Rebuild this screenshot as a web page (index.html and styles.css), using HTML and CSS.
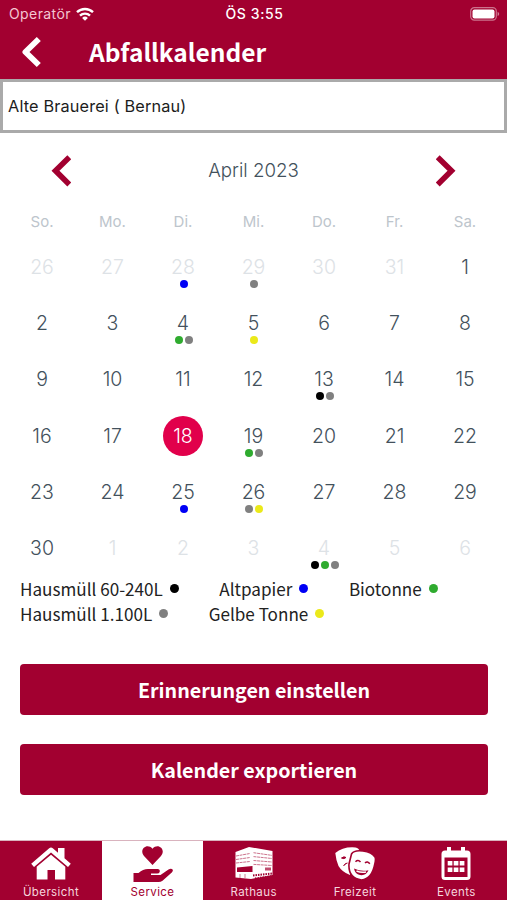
FILE: index.html
```html
<!DOCTYPE html>
<html lang="de">
<head>
    <meta charset="UTF-8">
    <meta name="viewport" content="width=device-width, initial-scale=1.0">
    <title>Abfallkalender</title>
    <link rel="stylesheet" href="styles.css">
</head>
<body>
    <div class="app">
        <header class="top">
            <div class="status-bar">
                <div class="carrier">
                    <span>Operatör</span>
                    <svg width="18" height="14" viewBox="0 0 18 14" fill="none" stroke="#fff" stroke-width="2.4">
                        <path d="M1 5.2A11.5 11.5 0 0 1 17 5.2"/>
                        <path d="M4 8.6A7.2 7.2 0 0 1 14 8.6"/>
                        <path d="M9 13.8L6.1 10.9A4.2 4.2 0 0 1 11.9 10.9Z" fill="#fff" stroke="none"/>
                    </svg>
                </div>
                <span class="clock">ÖS 3:55</span>
                <svg class="battery" width="30" height="14" viewBox="0 0 30 14">
                    <rect x="0.7" y="0.7" width="25.6" height="12.4" rx="3.6" fill="none" stroke="#fff" stroke-opacity="0.45" stroke-width="1.2"/>
                    <rect x="2.5" y="2.4" width="22" height="9" rx="2" fill="#fff"/>
                    <path d="M27.6 4.8Q29.2 5.6 29.2 6.9T27.6 9Z" fill="#fff" fill-opacity="0.5"/>
                </svg>
            </div>
            <div class="title-bar">
                <svg width="20" height="32" viewBox="0 0 20 32" fill="none" stroke="#fff" stroke-width="5.8" stroke-linejoin="round">
                    <path d="M17.8 3L4.4 16L17.8 29"/>
                </svg>
                <h1>Abfallkalender</h1>
            </div>
        </header>

        <div class="address">Alte Brauerei ( Bernau)</div>

        <main>
            <div class="month">
                <svg width="20" height="32" viewBox="0 0 20 32" fill="none" stroke="#a20030" stroke-width="5.6">
                    <path d="M18.3 2.2L4.5 15.8L18.3 29.4"/>
                </svg>
                <span>April 2023</span>
                <svg width="20" height="32" viewBox="0 0 20 32" fill="none" stroke="#a20030" stroke-width="5.6">
                    <path d="M1.7 2.2L15.5 15.8L1.7 29.4"/>
                </svg>
            </div>

            <div class="weekdays">
                <span>So.</span><span>Mo.</span><span>Di.</span><span>Mi.</span><span>Do.</span><span>Fr.</span><span>Sa.</span>
            </div>

            <div class="days">
                <div class="day other"><span>26</span></div>
                <div class="day other"><span>27</span></div>
                <div class="day other"><span>28</span><div class="dots"><i class="blue"></i></div></div>
                <div class="day other"><span>29</span><div class="dots"><i class="gray"></i></div></div>
                <div class="day other"><span>30</span></div>
                <div class="day other"><span>31</span></div>
                <div class="day"><span>1</span></div>

                <div class="day"><span>2</span></div>
                <div class="day"><span>3</span></div>
                <div class="day"><span>4</span><div class="dots"><i class="green"></i><i class="gray"></i></div></div>
                <div class="day"><span>5</span><div class="dots"><i class="yellow"></i></div></div>
                <div class="day"><span>6</span></div>
                <div class="day"><span>7</span></div>
                <div class="day"><span>8</span></div>

                <div class="day"><span>9</span></div>
                <div class="day"><span>10</span></div>
                <div class="day"><span>11</span></div>
                <div class="day"><span>12</span></div>
                <div class="day"><span>13</span><div class="dots"><i class="black"></i><i class="gray"></i></div></div>
                <div class="day"><span>14</span></div>
                <div class="day"><span>15</span></div>

                <div class="day"><span>16</span></div>
                <div class="day"><span>17</span></div>
                <div class="day today"><span>18</span></div>
                <div class="day"><span>19</span><div class="dots"><i class="green"></i><i class="gray"></i></div></div>
                <div class="day"><span>20</span></div>
                <div class="day"><span>21</span></div>
                <div class="day"><span>22</span></div>

                <div class="day"><span>23</span></div>
                <div class="day"><span>24</span></div>
                <div class="day"><span>25</span><div class="dots"><i class="blue"></i></div></div>
                <div class="day"><span>26</span><div class="dots"><i class="gray"></i><i class="yellow"></i></div></div>
                <div class="day"><span>27</span></div>
                <div class="day"><span>28</span></div>
                <div class="day"><span>29</span></div>

                <div class="day"><span>30</span></div>
                <div class="day other"><span>1</span></div>
                <div class="day other"><span>2</span></div>
                <div class="day other"><span>3</span></div>
                <div class="day other"><span>4</span><div class="dots"><i class="black"></i><i class="green"></i><i class="gray"></i></div></div>
                <div class="day other"><span>5</span></div>
                <div class="day other"><span>6</span></div>
            </div>

            <div class="legend">
                <div>Hausmüll 60-240L<i class="black"></i></div>
                <div>Altpapier<i class="blue"></i></div>
                <div>Biotonne<i class="green"></i></div>
                <div>Hausmüll 1.100L<i class="gray"></i></div>
                <div>Gelbe Tonne<i class="yellow"></i></div>
            </div>

            <div class="actions">
                <button type="button">Erinnerungen einstellen</button>
                <button type="button">Kalender exportieren</button>
            </div>
        </main>

        <nav class="tabs">
            <a class="tab">
                <svg width="42" height="36" viewBox="0 0 42 36" fill="#fff">
                    <path d="M1.2 17.8L19.2 2.2Q21 .8 22.8 2.2L28 6.7V2H34.5V12.3L40.8 17.8L38 21L21 6.4L4 21Z"/>
                    <path d="M6.7 20.8L21 8.7L35.3 20.8V33.5H25V24H17.5V33.5H6.7Z"/>
                </svg>
                <span>Übersicht</span>
            </a>
            <a class="tab active">
                <svg width="42" height="38" viewBox="0 0 42 38" fill="#a20030">
                    <path d="M20.500 19L12 10C6.500 3.300 15.200-3.500 20.500 2.800C25.800-3.500 34.500 3.300 29 10Z"/>
                    <path d="M1.500 27H6.500Q11 23 16 23H25.500Q28.300 23.200 27.700 26Q27.200 27.500 25 27.500H19V29H28.500L36.500 23.500Q39.300 22 40.800 23.800Q41.300 25 39.800 26.600L30.500 34.700Q28.800 36 26.500 36H1.500Z"/>
                </svg>
                <span>Service</span>
            </a>
            <a class="tab">
                <svg width="42" height="36" viewBox="0 0 42 36">
                    <path d="M2.5 6L16 1L39.5 5V29L18 33L2.5 31.5Z" fill="#fff"/>
                    <path d="M3 10L17 7.5M3 13.5L17 11.5M3 17L17 15.5M20.5 6.7L39 9.4M20.5 10.6L39 12.5M20.5 14.5L39 16M20.5 18.4L39 19.5" stroke="#a20030" stroke-opacity="0.55" stroke-width="1" stroke-dasharray="3 .6" fill="none"/>
                    <path d="M4 21.5L19.5 20V26H4Z" fill="#a20030"/>
                    <path d="M32 21.5h6v3h-6z" fill="#a20030" fill-opacity="0.7"/>
                    <path d="M20 29.5L40 27.5M22 32.5L40 30" stroke="#a20030" stroke-width="2" stroke-dasharray="1.5 1"/>
                    <path d="M7 28v4M12 28v4" stroke="#a20030" stroke-opacity="0.5"/>
                </svg>
                <span>Rathaus</span>
            </a>
            <a class="tab">
                <svg width="42" height="36" viewBox="0 0 42 36">
                    <path d="M1.3 7Q9 .5 21.5 1.5Q25 2 25.5 5L18 9L16 29Q8 26 4.5 20Q2 14 1.3 7Z" fill="#fff"/>
                    <path d="M7.500 12q2.500-2 4.500-.5q-2 2-4.500 .5M9.500 20q1.500-3 4-3" fill="#a20030" stroke="#a20030"/>
                    <path d="M17.5 8Q20 3.8 29 5Q38 6.3 41 11Q42 13 40.8 18Q38 33 27.5 34Q14 32 15 18Z" fill="#fff" stroke="#a20030" stroke-width="1.6"/>
                    <path d="M21.5 15.7q2.5-2.500 5 .3M31 17q2.500-2.500 4.800 .8" fill="none" stroke="#a20030" stroke-width="1.5"/>
                    <path d="M20 22.500Q27 26 34.500 24.300Q32 30 26 29Q21 28 20 22.500Z" fill="#a20030"/>
                    <path d="M22.500 25Q27 27 32 26" fill="none" stroke="#fff" stroke-width="1.5"/>
                </svg>
                <span>Freizeit</span>
            </a>
            <a class="tab">
                <svg width="42" height="36" viewBox="0 0 42 36">
                    <path d="M10 4.5H12V1H16V4.5H26V1H30V4.5H32Q35.5 4.5 35.5 8V30.5Q35.5 34 32 34H10Q6.5 34 6.5 30.5V8Q6.5 4.5 10 4.5Z" fill="#fff"/>
                    <path d="M9.5 11.5H32.5V31H9.5Z" fill="#a20030"/>
                    <path d="M12.7 15h4.700v4.500h-4.700zM18.700 15h4.700v4.500h-4.700zM24.700 15h4.700v4.500h-4.700zM12.700 21.500h4.700v4.500h-4.700zM18.700 21.500h4.700v4.500h-4.700zM24.700 21.500h4.700v4.500h-4.700z" fill="#fff"/>
                </svg>
                <span>Events</span>
            </a>
        </nav>
    </div>
</body>
</html>
```
FILE: styles.css
```css
* {
    box-sizing: border-box;
}
body {
    margin: 0;
    background-color: #fff;
    font-family: Inter, "Liberation Sans", sans-serif;
}
.app {
    display: flex;
    flex-direction: column;
    width: 507px;
    height: 900px;
    overflow: hidden;
}
.top {
    height: 79px;
    background-color: #a20030;
    color: #fff;
}
.status-bar {
    display: grid;
    grid-template-columns: 1fr auto 1fr;
    align-items: center;
    height: 27px;
    padding: 0 7px 0 9px;
    font-size: 14px;
}
.carrier {
    display: flex;
    align-items: center;
    gap: 5px;
    letter-spacing: 0.4px;
    color: #f4c6d2;
}
.clock {
    font-weight: 500;
    letter-spacing: 0.6px;
}
.battery {
    justify-self: end;
}
.title-bar {
    display: flex;
    align-items: center;
    gap: 48px;
    height: 50px;
    padding-left: 21px;
}
.title-bar h1 {
    margin: 0;
    font-family: "Noto Sans CJK SC", sans-serif;
    font-size: 24.5px;
    font-weight: 700;
    line-height: 50px;
}
.address {
    height: 54px;
    padding: 0 5px;
    border: 3px solid #aaa;
    font-size: 16.3px;
    letter-spacing: 0.15px;
    line-height: 48px;
    color: #1c1c1c;
}
main {
    flex: 1;
}
.month {
    display: flex;
    align-items: center;
    justify-content: space-between;
    height: 75px;
    padding: 0 51px;
    font-size: 18.7px;
    font-weight: 300;
    color: #43515c;
}
.weekdays, .days {
    display: grid;
    grid-template-columns: repeat(7, 70.5px);
    justify-content: center;
    text-align: center;
}
.weekdays {
    height: 39px;
    font-size: 15px;
    line-height: 27px;
    color: #bdc5cc;
}
.days {
    grid-template-rows: repeat(5, 56.2px) 48px; /* last row runs up to the legend */
    font-size: 19.5px;
    font-weight: 300;
    color: #43515c;
}
.day {
    display: flex;
    flex-direction: column;
    align-items: center;
}
.day span {
    width: 40px;
    height: 40px;
    line-height: 40px;
    border-radius: 50%;
}
.other {
    color: #dde2e6;
}
.today span {
    background-color: #e1004b;
    color: #fff;
}
.dots {
    display: flex;
    gap: 2px;
    margin-top: -7px;
    padding-left: 1px;
}
i {
    width: 8px;
    height: 8px;
    border-radius: 50%;
}
.black { background-color: #000; }
.blue { background-color: #0000f5; }
.green { background-color: #2fab2f; }
.gray { background-color: #808080; }
.yellow { background-color: #ebe91a; }
.legend {
    display: flex;
    flex-wrap: wrap;
    column-gap: 40.5px;
    padding: 0 20px;
    font-family: "Noto Sans CJK SC", sans-serif;
    font-size: 17.1px;
    line-height: 25px;
    color: #222;
}
.legend div {
    display: flex;
    align-items: center;
    gap: 7px;
}
.legend i {
    width: 9px;
    height: 9px;
}
.actions {
    display: flex;
    flex-direction: column;
    gap: 29px;
    padding: 38px 19px 0 20px;
}
.actions button {
    height: 51px;
    padding: 0;
    border: none;
    border-radius: 4px;
    background-color: #a20030;
    color: #fff;
    font-family: "Noto Sans CJK SC", sans-serif;
    font-size: 19.7px;
    font-weight: 700;
}
.tabs {
    display: grid;
    grid-template-columns: 102px 101px repeat(3, 1fr);
    height: 60px;
    border-top: 1px solid #d9b3be;
    background-color: #a20030;
}
.tab {
    display: flex;
    flex-direction: column;
    align-items: center;
    justify-content: space-between;
    padding: 5px 0 0;
    font-size: 11.5px;
    line-height: 15px;
    letter-spacing: 0.4px;
    color: #f6d5de;
}
.active {
    background-color: #fff;
    color: #a20030;
}
```
